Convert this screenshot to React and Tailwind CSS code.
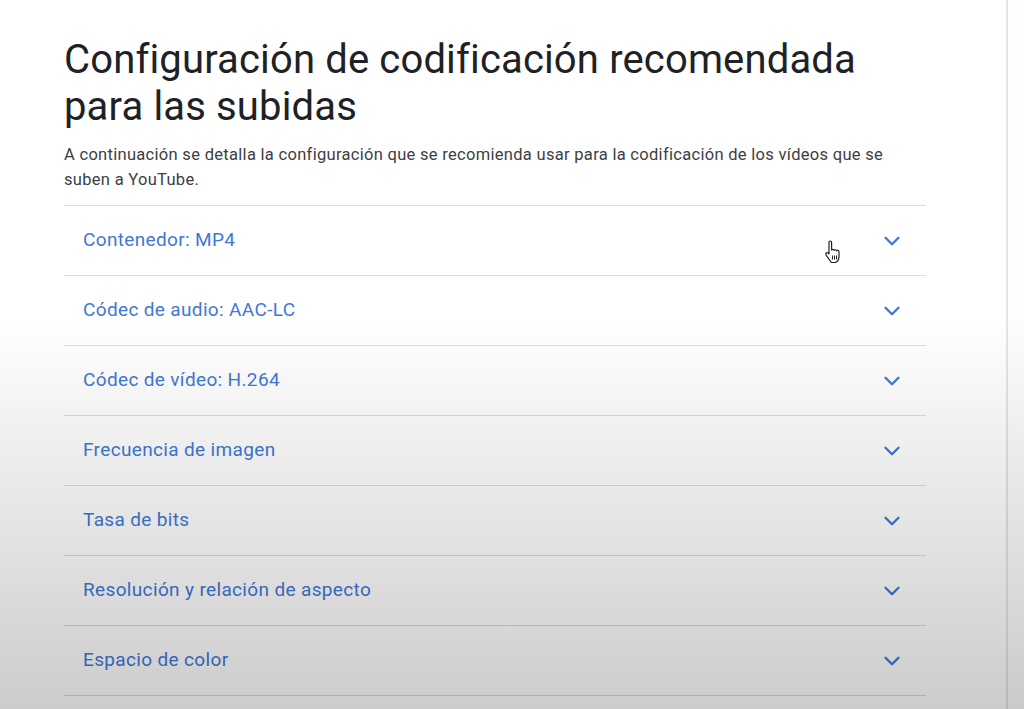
import { ChevronDown } from 'lucide-react';

const items = [
    'Contenedor: MP4',
    'Códec de audio: AAC-LC',
    'Códec de vídeo: H.264',
    'Frecuencia de imagen',
    'Tasa de bits',
    'Resolución y relación de aspecto',
    'Espacio de color',
];

const HandCursor = () => (
    <svg width="20" height="24" viewBox="0 0 20 24" className="absolute left-[823px] top-[240px]">
        <path
            d="M6 2.5c0-1 .6-1.5 1.3-1.5s1.3.5 1.3 1.5V10c.3-.8 2.4-.9 2.6.3.4-.8 2.3-.8 2.5.5.5-.7 2.3-.6 2.3.9v5.3c0 2.6-1.6 4.5-3.6 5.5H8.3L4.2 16.6c-.7-.9-2.4-3-.6-3.8 1-.4 1.9.3 2.4 1V2.5z"
            fill="#fff"
            stroke="#222"
            strokeWidth="1.2"
            strokeLinejoin="round"
        />
        <path d="M9.5 15.5v4M11.5 15.5v4M13.5 15.5v4" stroke="#222" strokeWidth="1" />
    </svg>
);

const App = () => {
    return (
        <div className="relative h-[709px] w-[1024px] overflow-hidden bg-white font-['Roboto',sans-serif]">
            <div className="flex h-full">
                <div className="w-[1006px] pl-[64px] pr-[80px]">
                    <h1 className="pr-[40px] pt-[36px] text-[40px] leading-[47px] tracking-[0.15px] text-[#202124]">
                        Configuración de codificación recomendada para las subidas
                    </h1>
                    <p className="mt-[12px] pr-[20px] text-[16.5px] leading-[25px] tracking-[0.3px] text-[#3c4043]">
                        A continuación se detalla la configuración que se recomienda usar para la codificación de los vídeos que se suben a YouTube.
                    </p>
                    <div className="mt-[13px] border-t border-[#dadce0]">
                        {items.map(item => (
                            <div key={item} className="flex h-[70px] items-center justify-between border-b border-[#dadce0] pl-[19px] pr-[21px]">
                                <span className="text-[19px] tracking-[0.35px] text-[#4078d8]">{item}</span>
                                <ChevronDown size={26} strokeWidth={2.2} className="text-[#4078d8]" />
                            </div>
                        ))}
                    </div>
                </div>
                <div className="w-[2px] bg-[#e4e4e4]" />
                <div className="flex-1 bg-[#fdfdfd]" />
            </div>
            <HandCursor />
            {/* video vignette at the bottom */}
            <div className="pointer-events-none absolute inset-0 bg-gradient-to-b from-transparent from-[45%] to-black/20" />
        </div>
    );
};

export default App;
